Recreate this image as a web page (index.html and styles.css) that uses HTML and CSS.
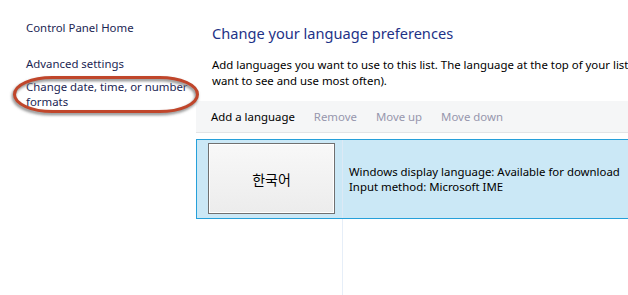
FILE: index.html
```html
<!DOCTYPE html>
<html lang="en">
<head>
  <meta charset="UTF-8" />
  <title>Language</title>
  <link rel="stylesheet" href="styles.css">
</head>
<body>
  <div class="window">
    <aside class="sidebar">
      <a href="#" class="side-link home">Control Panel Home</a>
      <a href="#" class="side-link">Advanced settings</a>
      <a href="#" class="side-link">Change date, time, or number<br>formats</a>

      <!-- annotation circle -->
      <svg class="mark" width="205" height="50" viewBox="0 0 205 50">
        <defs>
          <filter id="blur" x="-10%" y="-30%" width="120%" height="160%">
            <feGaussianBlur stdDeviation="1.4" />
          </filter>
        </defs>
        <rect x="13.5" y="9.5" width="183" height="34" rx="38" ry="17" fill="none" stroke="#7d7d7d" stroke-width="3" filter="url(#blur)" />
        <rect x="14.5" y="7.5" width="183" height="34" rx="38" ry="17" fill="none" stroke="#c0462b" stroke-width="3" />
      </svg>
    </aside>

    <main class="content">
      <h1 class="title">Change your language preferences</h1>
      <p class="intro">Add languages you want to use to this list. The language at the top of your list is your primary language (the one you<br>want to see and use most often).</p>

      <div class="toolbar">
        <a href="#" class="tool">Add a language</a>
        <span class="tool disabled">Remove</span>
        <span class="tool disabled">Move up</span>
        <span class="tool disabled">Move down</span>
      </div>

      <div class="lang-list">
        <div class="lang-row selected">
          <div class="lang-cell">
            <div class="lang-button">한국어</div>
          </div>
          <div class="lang-info">
            <div>Windows display language: Available for download</div>
            <div>Input method: Microsoft IME</div>
          </div>
        </div>
        <div class="lang-rest">
          <div class="lang-cell"></div>
        </div>
      </div>
    </main>
  </div>
</body>
</html>
```

FILE: styles.css
```css
html, body {
  height: 100%;
}

body {
  margin: 0;
  background: #fff;
  font-family: "Noto Sans", "Open Sans", sans-serif;
  font-size: 11.4px;
  color: #000;
  overflow: hidden;
}

.window {
  display: flex;
  height: 100%;
}

.sidebar {
  position: relative;
  width: 170px;
  flex-shrink: 0;
  padding: 20px 0 0 26px;
  display: flex;
  flex-direction: column;
  white-space: nowrap;
}

.side-link {
  color: #1b2653;
  text-decoration: none;
  line-height: 15px;
  margin-bottom: 8px;
}

.side-link.home {
  margin-bottom: 21px;
}

.mark {
  position: absolute;
  left: 0;
  top: 70px;
}

.content {
  flex: 1;
  min-width: 0;
  display: flex;
  flex-direction: column;
}

.title {
  margin: 23px 0 0 16px;
  font-size: 14.6px;
  font-weight: normal;
  color: #1e3287;
  line-height: 20px;
}

.intro {
  margin: 14px 0 0 16px;
  line-height: 16px;
  white-space: nowrap;
}

.toolbar {
  margin-top: 12px;
  height: 31px;
  background: #f5f6f7;
  border-bottom: 1px solid #e3e4e6;
  display: flex;
  align-items: center;
  padding-left: 15px;
  white-space: nowrap;
}

.tool {
  color: #000;
  text-decoration: none;
  margin-right: 19px;
}

.tool.disabled {
  color: #9797ad;
}

.lang-list {
  margin-top: 6px;
  flex: 1;
  display: flex;
  flex-direction: column;
}

.lang-row {
  display: flex;
  height: 78px;
  background: #cbe8f6;
  border: 1px solid #26a0da;
  border-right: none;
}

.lang-cell {
  width: 146px;
  flex-shrink: 0;
  border-right: 1px solid #dde9f5;
  box-sizing: border-box;
  padding: 3px 0 0 11px;
}

.lang-button {
  width: 125px;
  height: 69px;
  border: 1px solid #707070;
  box-shadow: inset 0 0 0 1px #fff;
  background: linear-gradient(#f8f8f8, #ececec);
  display: flex;
  align-items: center;
  justify-content: center;
  font-family: "Noto Sans CJK KR", sans-serif;
  font-size: 14px;
  color: #000;
}

.lang-info {
  padding: 24px 0 0 6px;
  line-height: 15px;
  white-space: nowrap;
}

.lang-rest {
  flex: 1;
  display: flex;
}

.lang-rest .lang-cell {
  border-right-color: #e6eef8;
  margin-left: 1px;
}
```
